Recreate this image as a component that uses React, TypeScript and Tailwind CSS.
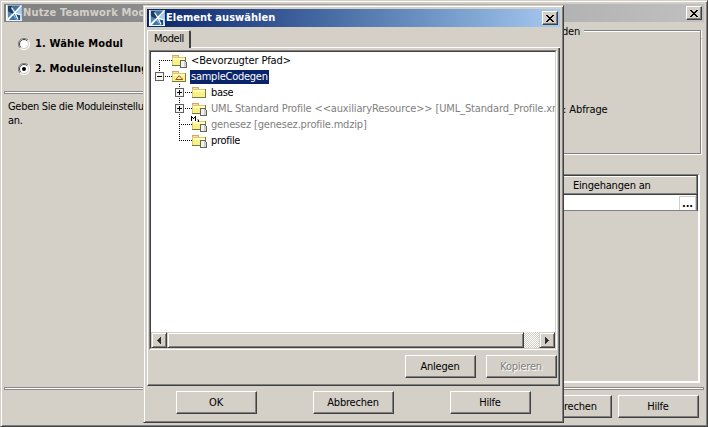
import type { ReactNode } from "react";

function Logo() {
  return (
    <svg width="16" height="16" viewBox="0 0 16 16" className="shrink-0">
      <defs>
        <linearGradient id="sky" x1="0" y1="0" x2="0" y2="1">
          <stop offset="0" stopColor="#7fa9cf" />
          <stop offset="0.5" stopColor="#a4c6e2" />
          <stop offset="1" stopColor="#dcebf6" />
        </linearGradient>
      </defs>
      <rect width="16" height="16" fill="url(#sky)" />
      <path d="M0 0h1.500v16H0z" fill="#fff" />
      <path d="M2 1h4l3 6-2 2-5-2z" fill="#1c3c66" />
      <path d="M2 6l4 3-4 4z" fill="#4f86b8" />
      <path d="M6 1h8L9 7z" fill="#44709f" />
      <path d="M15 2v8l-5-2z" fill="#a9cdea" />
      <path d="M8 9l6 1v5h-3z" fill="#174b83" />
      <path d="M7 10l4 5H3z" fill="#3d77ae" />
      <path d="M15.500 0.500L2 14.500M5.500 2.500l3.500 5.500 3 6.500M9 8l6 2" stroke="#fff" strokeWidth="1.300" fill="none" />
      <path d="M0 15h16v1H0z" fill="#eef4fa" />
    </svg>
  );
}

function CloseButton() {
  return (
    <div className="flex h-[14px] w-4 shrink-0 items-center justify-center border border-t-white border-r-[#404040] border-b-[#404040] border-l-white bg-[#d4d0c8] shadow-[inset_-1px_-1px_0_#808080]">
      <svg width="8" height="7" viewBox="0 0 8 7" shapeRendering="crispEdges">
        <path d="M0 0h2v1h1v1h2V1h1V0h2v1H7v1H6v1H5v1h1v1h1v1h1v1H6V6H5V5H3v1H2v1H0V6h1V5h1V4h1V3H2V2H1V1H0z" fill="#000" />
      </svg>
    </div>
  );
}

function Button({ children, className = "w-[81px]", disabled = false }: { children: ReactNode; className?: string; disabled?: boolean }) {
  return (
    <button
      className={`flex h-[23px] shrink-0 items-center justify-center border border-t-white border-r-[#404040] border-b-[#404040] border-l-white bg-[#d4d0c8] pt-px pr-px whitespace-nowrap shadow-[inset_-1px_-1px_0_#808080] ${className} ${
        disabled ? "text-[#808080] [text-shadow:1px_1px_0_#fff]" : "text-black"
      }`}
    >
      {children}
    </button>
  );
}

function Separator() {
  return <div className="h-[3px] shrink-0 border border-[#8c8a82] bg-white" />;
}

function Radio({ checked = false, children }: { checked?: boolean; children: ReactNode }) {
  return (
    <label className="flex h-[25px] items-center whitespace-nowrap">
      <svg width="12" height="12" viewBox="0 0 12 12" className="mr-[5px] shrink-0">
        <circle cx="6" cy="6" r="5" fill="#fff" />
        <path d="M2 10A5.5 5.5 0 0 1 10 2" fill="none" stroke="#808080" />
        <path d="M2.8 9.2A4.5 4.5 0 0 1 9.2 2.8" fill="none" stroke="#404040" />
        <path d="M10 2A5.5 5.5 0 0 1 2 10" fill="none" stroke="#fff" />
        <path d="M9.2 2.8A4.5 4.5 0 0 1 2.8 9.2" fill="none" stroke="#d4d0c8" />
        {checked && <circle cx="6" cy="6" r="2" fill="#000" />}
      </svg>
      <span className="font-bold tracking-[0.15px]">{children}</span>
    </label>
  );
}

type Mark = "page" | "triangle" | "module" | "none";

function Folder({ x, mark }: { x: number; mark: Mark }) {
  return (
    <g transform={`translate(${x} 3)`} shapeRendering="crispEdges">
      <path d="M0 0h7v2H0z" fill="#d9a56c" />
      <path d="M1 1h5v1H1z" fill="#ffd9a8" />
      <path d="M0 2h14v9H0z" fill="#77774e" />
      <path d="M0 2h13v8H0z" fill="#d8ca70" />
      <path d="M1 3h12v7H1z" fill="#f7f283" />
      <path d="M1 3h12v2H1z" fill="#ffffb8" />
      {mark === "triangle" && (
        <path d="M3.8 8.500h6.900L7.250 4.700z" fill="#fff3a0" stroke="#8b3a1c" strokeWidth="0.900" shapeRendering="geometricPrecision" />
      )}
      {(mark === "page" || mark === "module") && (
        <>
          <path d="M8 5h5v1h1v1h1v6H8z" fill="#66665e" />
          <path d="M9 6h4v1h1v5H9z" fill="#cfcfcf" />
          <path d="M9 6h3v6H9z" fill="#f2f2f2" />
        </>
      )}
      {mark === "module" && (
        <>
          <path d="M-2 -3h7v6h-7z" fill="#fff" />
          <path d="M-1 2v-5h1v1h1v1h1v-1h1v-1h1v5h-1v-3h-1v1h-1v-1h-1v3zM6 1h1v2h-1z" fill="#000" />
        </>
      )}
    </g>
  );
}

function Toggle({ x, open = false }: { x: number; open?: boolean }) {
  return (
    <g shapeRendering="crispEdges">
      <rect x={x - 4} y="4" width="9" height="9" fill="#606060" />
      <rect x={x - 3} y="5" width="7" height="7" fill="#f4f4f4" />
      <path d={`M${x - 2} 8h5v1h-5z`} fill="#000" />
      {!open && <path d={`M${x} 6h1v5h-1z`} fill="#000" />}
    </g>
  );
}

type Row = { label: string; level: 0 | 1; mark: Mark; toggle?: "open" | "closed"; from: number; to: number; tone: string };

const rows: Row[] = [
  { label: "<Bevorzugter Pfad>", level: 0, mark: "page", from: 8, to: 16, tone: "text-black tracking-[-0.13px]" },
  { label: "sampleCodegen", level: 0, mark: "triangle", toggle: "open", from: 0, to: 8, tone: "" },
  { label: "base", level: 1, mark: "none", toggle: "closed", from: 0, to: 16, tone: "text-black tracking-[-0.3px]" },
  { label: "UML Standard Profile <<auxiliaryResource>> [UML_Standard_Profile.xml]", level: 1, mark: "page", toggle: "closed", from: 0, to: 16, tone: "text-[#808080] tracking-[-0.14px]" },
  { label: "genesez [genesez.profile.mdzip]", level: 1, mark: "module", from: 0, to: 16, tone: "text-[#808080] tracking-[-0.17px]" },
  { label: "profile", level: 1, mark: "page", from: 0, to: 8, tone: "text-black tracking-[-0.3px]" },
];

function TreeRow({ row }: { row: Row }) {
  const x = row.level ? 28 : 8;
  const selected = row.toggle === "open";
  return (
    <div className="flex h-4 items-center whitespace-nowrap">
      <svg width={row.level ? 59 : 39} height="16" className="shrink-0 overflow-visible">
        <path d={`M${x}.5 ${row.from}V${row.to}M${x} 8.5h13`} stroke="#000" strokeDasharray="1 1" shapeRendering="crispEdges" />
        {row.toggle && <Toggle x={x} open={selected} />}
        <Folder x={x + 13} mark={row.mark} />
      </svg>
      <span className={selected ? "mt-px h-[14px] w-[79px] bg-[#0a246a] pl-px leading-[14px] tracking-[-0.25px] text-white" : `min-w-0 overflow-hidden pt-0.5 pl-px ${row.tone}`}>{row.label}</span>
    </div>
  );
}

function Arrow({ right = false }: { right?: boolean }) {
  return (
    <div className="flex w-4 shrink-0 items-center justify-center border border-t-[#d4d0c8] border-r-[#404040] border-b-[#404040] border-l-[#d4d0c8] bg-[#d4d0c8] shadow-[inset_1px_1px_0_#fff,inset_-1px_-1px_0_#808080]">
      <svg width="4" height="7" viewBox="0 0 4 7" shapeRendering="crispEdges">
        <path d={right ? "M0 0h1v1h1v1h1v1h1v1H3v1H2v1H1v1H0z" : "M4 0H3v1H2v1H1v1H0v1h1v1h1v1h1v1h1z"} fill="#303030" />
      </svg>
    </div>
  );
}

function Dialog() {
  return (
    <section className="absolute top-[4px] left-[142px] flex h-[418px] w-[421px] flex-col border border-t-[#d4d0c8] border-r-[#404040] border-b-[#404040] border-l-[#d4d0c8] bg-[#d4d0c8] p-[3px] shadow-[inset_1px_1px_0_#fff,inset_-1px_-1px_0_#808080]">
      <header className="flex h-[18px] shrink-0 items-center bg-linear-to-r from-[#0a246a] to-[#a6caf0] pr-0.5 pl-0.5">
        <Logo />
        <h1 className="grow pl-px font-bold tracking-[0.03px] whitespace-nowrap text-white">Element auswählen</h1>
        <CloseButton />
      </header>
      <div className="mt-[3px] flex h-[18px] shrink-0">
        <div className="w-[44px] rounded-t-[2px] border-t border-r-2 border-l border-t-white border-r-[#404040] border-l-white pt-px pl-[6px] leading-[13px] tracking-[-0.45px]">Modell</div>
        <div className="grow border-b border-white" />
      </div>
      <div className="flex h-[338px] w-[413px] shrink-0 flex-col border-r border-b border-l border-r-[#404040] border-b-[#404040] border-l-white pt-[2px] pr-[2px] pl-px shadow-[inset_-1px_-1px_0_#808080]">
        <div className="flex h-[300px] w-[408px] shrink-0 flex-col border border-t-[#808080] border-r-white border-b-white border-l-[#808080]">
          <div className="flex grow flex-col border border-t-[#404040] border-r-[#d4d0c8] border-b-[#d4d0c8] border-l-[#404040] bg-white">
            <div className="h-[280px] w-[404px] overflow-hidden">
              {rows.map((row) => (
                <TreeRow key={row.label} row={row} />
              ))}
            </div>
            <div className="flex h-4 w-[404px] bg-[repeating-conic-gradient(#fff_0_25%,#d4d0c8_0_50%)] bg-size-[2px_2px]">
              <Arrow />
              <div className="w-[357px] border border-t-[#d4d0c8] border-r-[#404040] border-b-[#404040] border-l-[#d4d0c8] bg-[#d4d0c8] shadow-[inset_1px_1px_0_#fff,inset_-1px_-1px_0_#808080]" />
              <div className="grow" />
              <Arrow right />
            </div>
          </div>
        </div>
        <div className="flex justify-end gap-[10px] pt-[5px]">
          <Button className="w-[71px]">Anlegen</Button>
          <Button className="w-[71px]" disabled>Kopieren</Button>
        </div>
      </div>
      <footer className="flex gap-14 pt-[5px] pl-[29px]">
        <Button>OK</Button>
        <Button>Abbrechen</Button>
        <Button>Hilfe</Button>
      </footer>
    </section>
  );
}

export default function App() {
  return (
    <main className="relative flex h-[427px] w-[708px] flex-col overflow-hidden border border-t-[#d4d0c8] border-r-[#404040] border-b-[#404040] border-l-[#d4d0c8] bg-[#d4d0c8] p-[3px] font-['DejaVu_Sans_Condensed','DejaVu_Sans',sans-serif] text-[11px] leading-[14px] tracking-[-0.2px] text-black shadow-[inset_1px_1px_0_#fff,inset_-1px_-1px_0_#808080]">
      <header className="flex h-[18px] shrink-0 items-center bg-linear-to-r from-[#808080] to-[#c0c0c0] pr-0.5 pl-0.5">
        <Logo />
        <h1 className="grow pl-px font-bold tracking-[0.18px] whitespace-nowrap text-[#d4d0c8]">Nutze Teamwork Modul</h1>
        <CloseButton />
      </header>
      <div className="flex h-[365px] shrink-0">
        <div className="w-[556px] shrink-0 overflow-hidden">
          <div className="h-[69px] pt-[9px] pl-[14px]">
            <Radio>1. Wähle Modul</Radio>
            <Radio checked>2. Moduleinstellungen</Radio>
          </div>
          <Separator />
          <p className="w-[180px] pt-[6px] pl-1 tracking-[-0.3px] whitespace-nowrap">
            Geben Sie die Moduleinstellungen
            <br />
            an.
          </p>
        </div>
        <div className="w-[144px]">
          <div className="flex h-4 items-start">
            <span className="w-[24px] pt-[3px] pl-[2px]">den</span>
            <div className="mt-2 h-2 w-[117px] border-t border-r border-[#808080] shadow-[1px_0_0_#fff,inset_0_1px_0_#fff]" />
          </div>
          <div className="h-[116px] w-[141px] border-r border-b border-[#808080] pt-[65px] pl-[3px] tracking-[-0.1px] shadow-[1px_1px_0_#fff]">: Abfrage</div>
          <div className="mt-5 h-[209px] w-[140px] border-t border-r-2 border-b-2 border-t-[#808080] border-r-white border-b-white">
            <div className="h-5 border-t border-r border-b border-[#404040] pt-[3px] pl-[13px] shadow-[inset_-1px_-1px_0_#808080,inset_0_1px_0_#fff]">Eingehangen an</div>
            <div className="flex h-4 justify-end border-r border-b border-r-[#404040] border-b-[#808080] bg-white">
              <button className="mt-px flex h-[14px] w-[17px] items-start justify-center border-t border-r border-l border-[#d4d0c8] bg-white font-bold tracking-[-0.1px]">...</button>
              <div className="w-px bg-[#808080]" />
            </div>
          </div>
        </div>
      </div>
      <Separator />
      <footer className="flex justify-end gap-[6px] pt-[5px] pr-[5px]">
        <Button>Abbrechen</Button>
        <Button>Hilfe</Button>
      </footer>
      <Dialog />
    </main>
  );
}
